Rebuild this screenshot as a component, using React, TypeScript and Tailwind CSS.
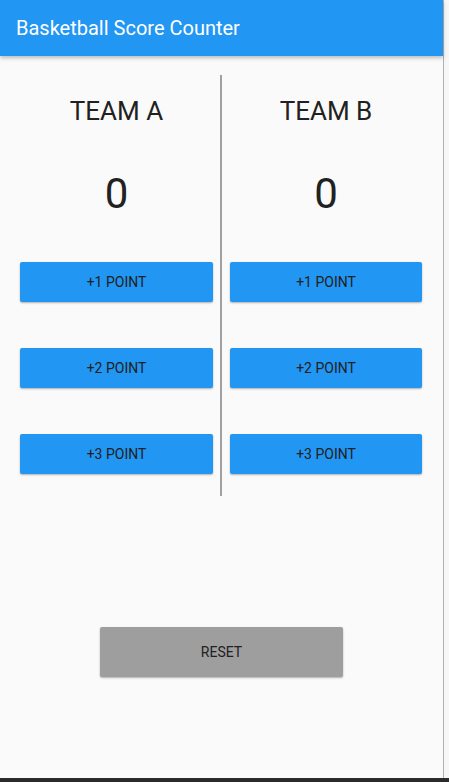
const teams = ['TEAM A', 'TEAM B']
const points = [1, 2, 3]

function TeamColumn({ name, className }: { name: string; className: string }) {
  return (
    <div className={`flex flex-col items-stretch pb-[22px] ${className}`}>
      <p className="mt-[21px] text-center text-[26px] leading-[30px] text-[#212121]">{name}</p>
      <p className="mt-[43px] text-center text-[42px] leading-[50px] text-[#212121]">0</p>
      <div className="mt-[43px] flex flex-col gap-[46px]">
        {points.map((p) => (
          <button
            key={p}
            className="h-[40px] rounded-[2px] bg-[#2196F3] text-[14px] uppercase text-[#212121] shadow-[0_1px_2px_rgba(0,0,0,0.3)]"
          >
            +{p} Point
          </button>
        ))}
      </div>
    </div>
  )
}

export default function App() {
  return (
    <div className="flex h-[782px] w-[449px] flex-col bg-[#fafafa] font-['Roboto',sans-serif]">
      <div className="flex flex-1">
        <div className="flex w-[443px] flex-col">
          <header className="relative z-10 flex h-[56px] items-center bg-[#2196F3] px-4 shadow-[0_2px_4px_rgba(0,0,0,0.25)]">
            <h1 className="text-[20px] text-white">Basketball Score Counter</h1>
          </header>

          <div className="mt-[19px] flex">
            <TeamColumn name={teams[0]} className="w-[220px] pl-[20px] pr-[7px]" />
            <div className="w-[2px] bg-[#a0a0a0]" />
            <TeamColumn name={teams[1]} className="w-[221px] pl-[8px] pr-[21px]" />
          </div>

          <div className="mt-[131px] flex justify-center">
            <button className="h-[50px] w-[243px] rounded-[2px] bg-[#9e9e9e] text-[14px] uppercase text-[#212121] shadow-[0_1px_2px_rgba(0,0,0,0.3)]">
              Reset
            </button>
          </div>
        </div>
        <div className="w-px bg-[#b0b0b0]" />
        <div className="flex-1 bg-[#f7f7f7]" />
      </div>
      <div className="h-[4px] bg-[#2b2b2b]" />
    </div>
  )
}
